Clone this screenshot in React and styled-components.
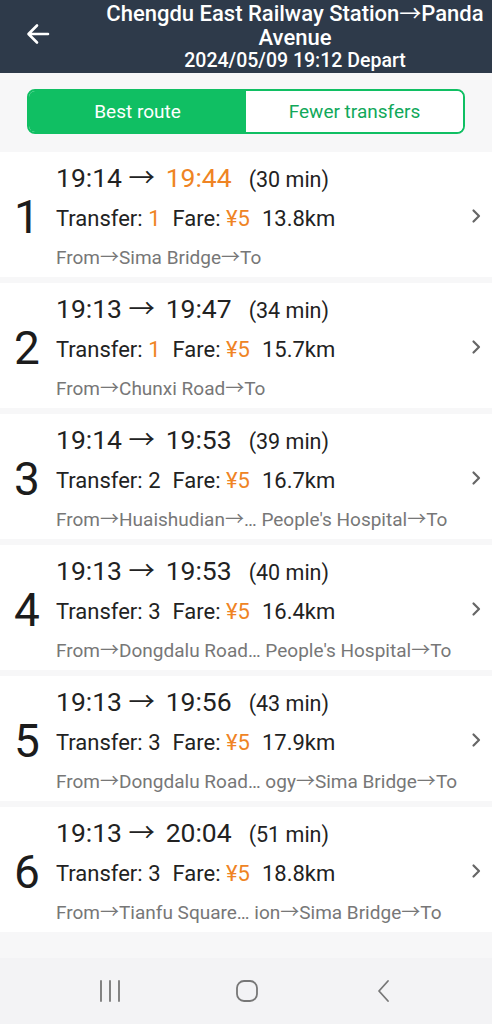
import styled, { createGlobalStyle } from 'styled-components';

const GlobalStyle = createGlobalStyle`
  html, body {
    margin: 0;
    padding: 0;
    background: #f7f7f8;
    font-family: Roboto, "Noto Sans", "Liberation Sans", sans-serif;
  }
  * { box-sizing: border-box; }
`;

const Page = styled.div`
  width: 492px;
  height: 1024px;
  display: flex;
  flex-direction: column;
  background: #f7f7f8;
  overflow: hidden;
`;

const Header = styled.header`
  height: 73px;
  background: #2e3a4a;
  display: flex;
  align-items: center;
  color: #fff;
`;

const BackButton = styled.div`
  width: 98px;
  flex-shrink: 0;
  height: 73px;
  display: flex;
  align-items: center;
  padding-left: 26px;
  padding-bottom: 6px;
`;

const TitleBlock = styled.div`
  flex: 1;
  text-align: center;
  white-space: nowrap;
  padding-bottom: 2px;
`;

const Title = styled.div`
  font-size: 22px;
  font-weight: 500;
  line-height: 24px;
`;

const Subtitle = styled.div`
  font-size: 19.5px;
  font-weight: 500;
  line-height: 22px;
`;

const Arrow = styled.span`
  font-family: "Noto Sans CJK SC", sans-serif;
  font-weight: 400;
`;

const SegmentBar = styled.div`
  padding: 16px 27px 18px;
`;

const Segment = styled.div`
  display: flex;
  height: 45px;
  border: 2px solid #10bf63;
  border-radius: 8px;
  overflow: hidden;
  background: #fff;
`;

const SegmentItem = styled.div`
  flex: 1;
  display: flex;
  align-items: center;
  justify-content: center;
  font-size: 19px;
  background: ${(p) => (p.$active ? '#10bf63' : '#fff')};
  color: ${(p) => (p.$active ? '#fff' : '#10a85a')};
`;

const List = styled.div`
  display: flex;
  flex-direction: column;
  gap: 6px;
`;

const Card = styled.div`
  height: 125px;
  background: #fff;
  display: flex;
  align-items: center;
`;

const Index = styled.div`
  width: 56px;
  flex-shrink: 0;
  padding-left: 14px;
  font-size: 46px;
  color: #1c1c1c;
  line-height: 1;
  padding-top: 4px;
`;

const Body = styled.div`
  flex: 1;
  min-width: 0;
  overflow: hidden;
  display: flex;
  flex-direction: column;
`;

const TimeLine = styled.div`
  font-size: 26.5px;
  line-height: 36px;
  color: #222;
  white-space: nowrap;
`;

const Duration = styled.span`
  font-size: 21.5px;
  margin-left: 17px;
`;

const Spacer = styled.span`
  display: inline-block;
  width: ${(p) => p.$w || 8}px;
`;

const InfoLine = styled.div`
  font-size: 22px;
  line-height: 30px;
  margin-top: 6px;
  color: #222;
  white-space: nowrap;
`;

const Accent = styled.span`
  color: #ef8424;
`;

const PathLine = styled.div`
  font-size: 19px;
  line-height: 26px;
  margin-top: 9px;
  color: #777;
  white-space: nowrap;
  overflow: hidden;
`;

const Chevron = styled.div`
  width: 33px;
  flex-shrink: 0;
  display: flex;
  justify-content: center;
  padding-top: 2px;
`;

const Filler = styled.div`
  flex: 1;
`;

const NavBar = styled.div`
  height: 66px;
  background: #f3f3f5;
  display: flex;
  align-items: center;
  gap: 97px;
  padding-left: 90px;
`;

const NavSlot = styled.div`
  width: 40px;
  display: flex;
  justify-content: center;
`;

const routes = [
  { dep: '19:14', arr: '19:44', arrHot: true, min: 30, transfer: 1, transferHot: true, km: '13.8', path: 'From→Sima Bridge→To' },
  { dep: '19:13', arr: '19:47', min: 34, transfer: 1, transferHot: true, km: '15.7', path: 'From→Chunxi Road→To' },
  { dep: '19:14', arr: '19:53', min: 39, transfer: 2, km: '16.7', path: "From→Huaishudian→… People's Hospital→To" },
  { dep: '19:13', arr: '19:53', min: 40, transfer: 3, km: '16.4', path: "From→Dongdalu Road… People's Hospital→To" },
  { dep: '19:13', arr: '19:56', min: 43, transfer: 3, km: '17.9', path: 'From→Dongdalu Road… ogy→Sima Bridge→To' },
  { dep: '19:13', arr: '20:04', min: 51, transfer: 3, km: '18.8', path: 'From→Tianfu Square… ion→Sima Bridge→To' },
];

// wrap each → so it takes the wide CJK glyph like the original app
const withArrows = (text) =>
  text.split('→').flatMap((part, i) => (i === 0 ? [part] : [<Arrow key={i}>→</Arrow>, part]));

const RouteCard = ({ n, route }) => (
  <Card>
    <Index>{n}</Index>
    <Body>
      <TimeLine>
        {route.dep} <Arrow>→</Arrow><Spacer $w={4} /> {route.arrHot ? <Accent>{route.arr}</Accent> : route.arr}
        <Duration>({route.min} min)</Duration>
      </TimeLine>
      <InfoLine>
        Transfer: {route.transferHot ? <Accent>{route.transfer}</Accent> : route.transfer}
        <Spacer $w={12} />Fare: <Accent>¥5</Accent>
        <Spacer $w={12} />{route.km}km
      </InfoLine>
      <PathLine>{withArrows(route.path)}</PathLine>
    </Body>
    <Chevron>
      <svg width="12" height="18" viewBox="0 0 12 18">
        <path d="M3.5 3.5 L9 9 L3.5 14.5" fill="none" stroke="#666" strokeWidth="2.2" strokeLinecap="round" strokeLinejoin="round" />
      </svg>
    </Chevron>
  </Card>
);

export default function App() {
  return (
    <Page>
      <GlobalStyle />
      <Header>
        <BackButton>
          <svg width="24" height="24" viewBox="0 0 24 24">
            <path d="M22 12 H3 M11 3.5 L2.5 12 L11 20.5" fill="none" stroke="#fff" strokeWidth="2.6" strokeLinecap="round" strokeLinejoin="round" />
          </svg>
        </BackButton>
        <TitleBlock>
          <Title>{withArrows('Chengdu East Railway Station→Panda')}</Title>
          <Title>Avenue</Title>
          <Subtitle>2024/05/09 19:12 Depart</Subtitle>
        </TitleBlock>
      </Header>
      <SegmentBar>
        <Segment>
          <SegmentItem $active>Best route</SegmentItem>
          <SegmentItem>Fewer transfers</SegmentItem>
        </Segment>
      </SegmentBar>
      <List>
        {routes.map((r, i) => (
          <RouteCard key={i} n={i + 1} route={r} />
        ))}
      </List>
      <Filler />
      <NavBar>
        <NavSlot>
          <svg width="22" height="22" viewBox="0 0 22 22">
            <path d="M2 1 V21 M11 1 V21 M20 1 V21" stroke="#777" strokeWidth="1.8" strokeLinecap="round" />
          </svg>
        </NavSlot>
        <NavSlot>
          <svg width="24" height="24" viewBox="0 0 24 24">
            <rect x="2" y="2" width="20" height="20" rx="7" fill="none" stroke="#777" strokeWidth="1.8" />
          </svg>
        </NavSlot>
        <NavSlot>
          <svg width="16" height="24" viewBox="0 0 16 24">
            <path d="M12 2 L3 12 L12 22" fill="none" stroke="#777" strokeWidth="1.8" strokeLinecap="round" strokeLinejoin="round" />
          </svg>
        </NavSlot>
      </NavBar>
    </Page>
  );
}
